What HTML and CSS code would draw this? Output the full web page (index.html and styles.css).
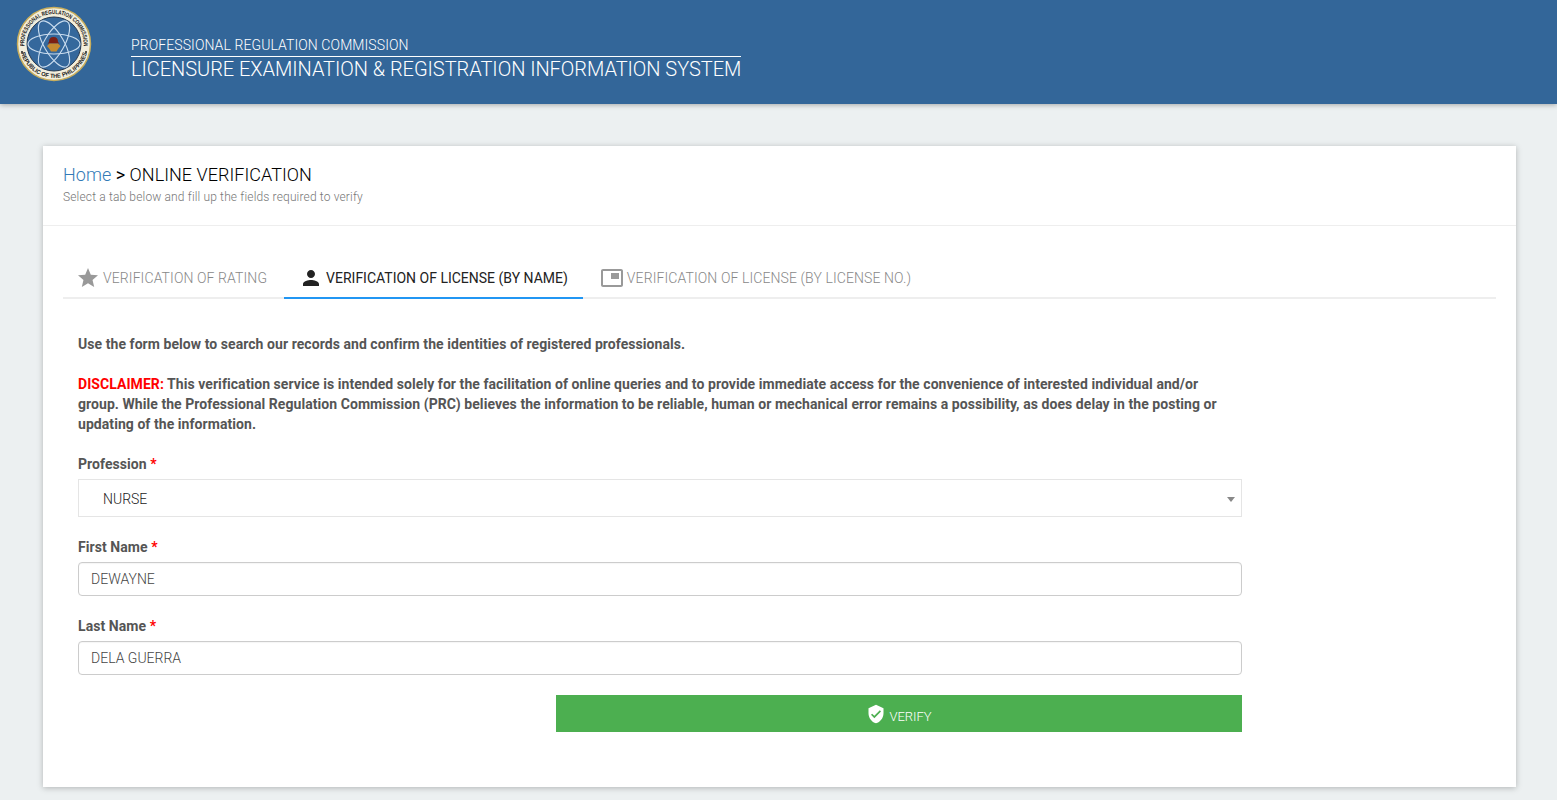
FILE: index.html
```html
<!DOCTYPE html>
<html lang="en">
<head>
    <meta charset="UTF-8">
    <meta name="viewport" content="width=device-width, initial-scale=1.0">
    <title>LERIS - Online Verification</title>
    <link rel="stylesheet" href="styles.css">
</head>
<body>
    <header class="topbar">
        <svg class="seal" viewBox="0 0 78 78" width="78" height="78">
            <defs>
                <path id="sealTop" d="M9.900 44 A29.600 29.600 0 1 1 68.100 44"/>
                <path id="sealBottom" d="M5.300 45 A34.300 34.300 0 0 0 72.700 45"/>
            </defs>
            <circle cx="39" cy="39" r="36.500" fill="#f2eedc" stroke="#c9ae5c" stroke-width="1.500"/>
            <circle cx="39" cy="39" r="27" fill="#35689c" stroke="#26384f" stroke-width="1"/>
            <text class="seal-text"><textPath href="#sealTop" startOffset="50%" text-anchor="middle" textLength="98" lengthAdjust="spacingAndGlyphs">PROFESSIONAL REGULATION COMMISSION</textPath></text>
            <text class="seal-text"><textPath href="#sealBottom" startOffset="50%" text-anchor="middle" textLength="88" lengthAdjust="spacingAndGlyphs">REPUBLIC OF THE PHILIPPINES</textPath></text>
            <circle cx="7" cy="47" r="1" fill="#222"/>
            <circle cx="71" cy="47" r="1" fill="#222"/>
            <g fill="none" stroke="#c9dcee" stroke-width="1.100">
                <ellipse cx="39" cy="39" rx="26" ry="10"/>
                <ellipse cx="39" cy="39" rx="26" ry="10" transform="rotate(60 39 39)"/>
                <ellipse cx="39" cy="39" rx="26" ry="10" transform="rotate(120 39 39)"/>
            </g>
            <path d="M34 37 Q34 32 38.500 32 Q43 32 43 37 L44.500 38.500 L32.500 38.500 Z" fill="#7c1f14"/>
            <path d="M32 41 L34.500 38.500 L43 38.500 L45.500 41 L43 44 L41.500 46.500 L36 46.500 L34.500 44 Z" fill="#c58a31"/>
        </svg>
        <div class="brand">
            <div class="brand-top">PROFESSIONAL REGULATION COMMISSION</div>
            <div class="brand-main">LICENSURE EXAMINATION &amp; REGISTRATION INFORMATION SYSTEM</div>
        </div>
    </header>

    <main class="card">
        <div class="card-head">
            <h1 class="crumb"><a href="#">Home</a> <b>&gt;</b> ONLINE VERIFICATION</h1>
            <p class="crumb-sub">Select a tab below and fill up the fields required to verify</p>
        </div>

        <div class="card-body">
            <ul class="tabs">
                <li class="tab">
                    <svg viewBox="0 0 24 24" width="24" height="24"><path d="M12 17.270L18.180 21l-1.640-7.030L22 9.240l-7.190-.61L12 2 9.190 8.630 2 9.240l5.460 4.730L5.820 21z"/></svg>
                    VERIFICATION OF RATING
                </li>
                <li class="tab active">
                    <svg viewBox="0 0 24 24" width="24" height="24"><path d="M12 12c2.210 0 4-1.790 4-4s-1.790-4-4-4-4 1.790-4 4 1.790 4 4 4zm0 2c-2.670 0-8 1.340-8 4v2h16v-2c0-2.660-5.330-4-8-4z"/></svg>
                    VERIFICATION OF LICENSE (BY NAME)
                </li>
                <li class="tab">
                    <svg viewBox="0 0 24 24" width="24" height="24"><path d="M19 7h-8v6h8V7zm2-4H3c-1.100 0-2 .9-2 2v14c0 1.100.9 1.980 2 1.980h18c1.100 0 2-.88 2-1.980V5c0-1.100-.9-2-2-2zm0 16.010H3V4.980h18v14.030z"/></svg>
                    VERIFICATION OF LICENSE (BY LICENSE NO.)
                </li>
            </ul>

            <form class="verify-form">
                <p class="note">Use the form below to search our records and confirm the identities of registered professionals.</p>
                <p class="note"><span class="disclaimer">DISCLAIMER:</span> This verification service is intended solely for the facilitation of online queries and to provide immediate access for the convenience of interested individual and/or group. While the Professional Regulation Commission (PRC) believes the information to be reliable, human or mechanical error remains a possibility, as does delay in the posting or updating of the information.</p>

                <div class="field">
                    <label>Profession <span class="req">*</span></label>
                    <div class="select-box">NURSE<span class="caret"></span></div>
                </div>
                <div class="field">
                    <label for="firstName">First Name <span class="req">*</span></label>
                    <input type="text" id="firstName" value="DEWAYNE">
                </div>
                <div class="field">
                    <label for="lastName">Last Name <span class="req">*</span></label>
                    <input type="text" id="lastName" value="DELA GUERRA">
                </div>
                <div class="actions">
                    <button type="button" class="verify-btn">
                        <svg viewBox="0 0 24 24" width="20" height="20"><path fill="#fff" d="M12 1L3 5v6c0 5.550 3.840 10.740 9 12 5.160-1.260 9-6.450 9-12V5l-9-4zm-2 16l-4-4 1.410-1.410L10 14.170l6.590-6.590L18 9l-8 8z"/></svg>
                        <span class="verify-label">VERIFY</span>
                    </button>
                </div>
            </form>
        </div>
    </main>
</body>
</html>
```

FILE: styles.css
```css
* {
    box-sizing: border-box;
}
body {
    margin: 0;
    background: #ecf0f1;
    font-family: Roboto, "Liberation Sans", sans-serif;
    color: #333;
}
.topbar {
    display: flex;
    align-items: flex-start;
    height: 104px;
    padding: 5px 0 0 15px;
    background: #336699;
    box-shadow: 0 1px 5px rgba(0,0,0,0.3);
}
.seal {
    flex: none;
}
.seal-text {
    font-family: "Liberation Sans", sans-serif;
    font-size: 6px;
    font-weight: 700;
    fill: #222;
}
.brand {
    margin: 32px 0 0 38px;
    color: #fff;
}
.brand-top {
    padding-bottom: 2px;
    border-bottom: 1px solid #fff;
    font-size: 14px;
    line-height: 17px;
    letter-spacing: 0.09px;
    font-weight: 300;
}
.brand-main {
    font-size: 20px;
    line-height: 25px;
    font-weight: 300;
    letter-spacing: -0.04px;
}
.card {
    margin: 42px 41px 13px 43px;
    height: 641px;
    background: #fff;
    box-shadow: 0 1px 6px rgba(0,0,0,0.25);
}
.card-head {
    height: 80px;
    padding: 17px 20px 0;
    border-bottom: 1px solid #eee;
}
.crumb {
    margin: 0;
    font-size: 18px;
    line-height: 24px;
    font-weight: 300;
    letter-spacing: 0.04px;
    color: #000;
}
.crumb a {
    color: #337ab7;
    text-decoration: none;
}
.crumb b {
    font-weight: 400;
}
.crumb-sub {
    margin: 2px 0 0;
    font-size: 12px;
    line-height: 17px;
    font-weight: 300;
    letter-spacing: 0.15px;
    color: #777;
}
.card-body {
    padding: 33px 20px 0;
}
.tabs {
    display: flex;
    margin: 0;
    padding: 0;
    list-style: none;
    border-bottom: 2px solid #eee;
}
.tab {
    display: flex;
    align-items: center;
    gap: 3px;
    height: 40px;
    margin-bottom: -2px;
    padding: 0 15px;
    border-bottom: 2px solid transparent;
    font-size: 14px;
    font-weight: 300;
    letter-spacing: 0.1px;
    color: #888;
}
.tab:first-child {
    padding: 0 17px 0 13px;
}
.tab:last-child {
    padding-left: 17px;
}
.tab svg {
    fill: #999;
}
.tab.active {
    color: #222;
    font-weight: 400;
    letter-spacing: 0;
    border-bottom-color: #2196f3;
}
.tab.active svg {
    fill: #222;
}
.verify-form {
    width: 1164px;
    margin: 0 0 0 15px;
    padding-top: 35px;
}
.note {
    max-width: 1150px;
    margin: 0 0 20px;
    font-size: 14px;
    line-height: 20px;
    font-weight: 700;
    letter-spacing: 0.06px;
    color: #555;
}
.disclaimer {
    color: #f00;
}
.field {
    margin-bottom: 20px;
}
.field label {
    display: block;
    margin-bottom: 5px;
    font-size: 14px;
    line-height: 20px;
    font-weight: 700;
    letter-spacing: 0.06px;
    color: #555;
}
.req {
    color: #f00;
}
.select-box {
    position: relative;
    height: 38px;
    padding: 0 24px;
    border: 1px solid #e5e5e5;
    font-size: 14px;
    font-weight: 300;
    line-height: 38px;
    color: #222;
}
.caret {
    position: absolute;
    top: 17px;
    right: 6px;
    border: 4px solid transparent;
    border-top: 5px solid #888;
    border-bottom: 0;
}
input {
    display: block;
    width: 100%;
    height: 34px;
    padding: 0 12px;
    border: 1px solid #ccc;
    border-radius: 4px;
    font-family: inherit;
    font-size: 14px;
    font-weight: 300;
    color: #444;
    box-shadow: inset 0 1px 1px rgba(0,0,0,0.04);
}
.actions {
    display: flex;
    justify-content: flex-end;
}
.verify-btn {
    display: flex;
    align-items: center;
    justify-content: center;
    gap: 3px;
    width: 686px;
    height: 37px;
    border: none;
    background: #4caf50;
    color: #fff;
    font-family: inherit;
    font-size: 13px;
    font-weight: 300;
    cursor: pointer;
}
.verify-label {
    margin-top: 5px;
}
```
